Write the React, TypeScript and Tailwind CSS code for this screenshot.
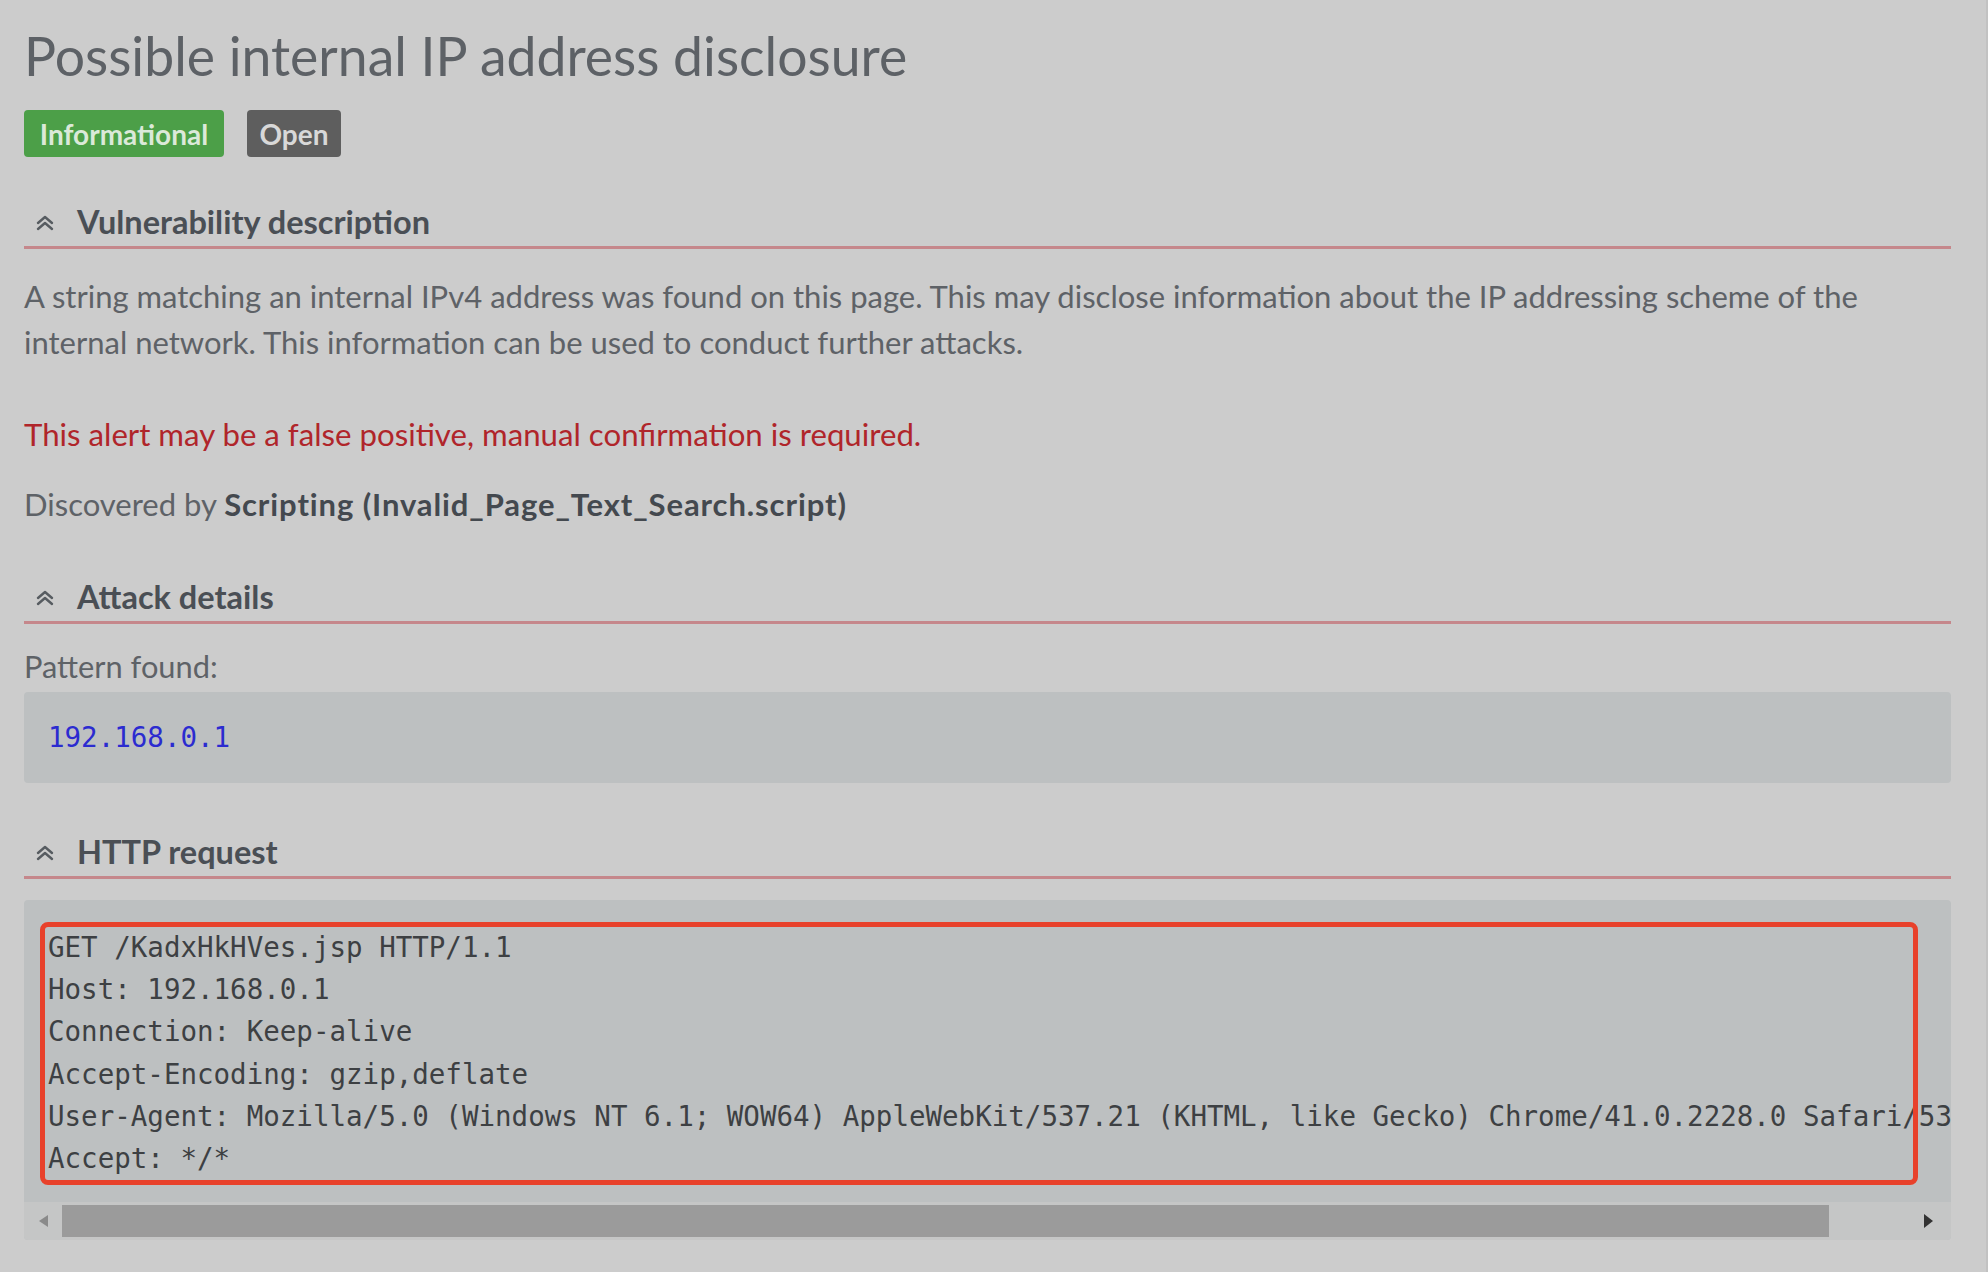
import type { FC, ReactNode } from "react";

const sans = "font-['Lato','Noto_Sans',sans-serif]";
const mono = "font-['DejaVu_Sans_Mono','Liberation_Mono',monospace]";

// double chevron shown before every section title
const Collapse: FC = () => (
	<svg
		viewBox="0 0 20 18"
		className="ml-[11px] h-[18px] w-[20px] text-[#575c61]"
		fill="none"
		stroke="currentColor"
		strokeWidth={2.4}
		strokeLinecap="round"
		strokeLinejoin="round"
	>
		<path d="M3 9 L10 3 L17 9" />
		<path d="M3 15 L10 9 L17 15" />
	</svg>
);

const SectionHeader: FC<{ title: string; className?: string }> = ({ title, className }) => (
	<div
		className={`flex h-[50px] items-center border-b-[3px] border-[#c5878b] ${className ?? ""}`}
	>
		<Collapse />
		<span className="ml-[22px] text-[32.5px] font-bold text-[#4a4f55]">{title}</span>
	</div>
);

const requestLines = [
	"GET /KadxHkHVes.jsp HTTP/1.1",
	"Host: 192.168.0.1",
	"Connection: Keep-alive",
	"Accept-Encoding: gzip,deflate",
	"User-Agent: Mozilla/5.0 (Windows NT 6.1; WOW64) AppleWebKit/537.21 (KHTML, like Gecko) Chrome/41.0.2228.0 Safari/537.21",
	"Accept: */*",
];

const Badge: FC<{ children: ReactNode; className: string }> = ({ children, className }) => (
	<span
		className={`flex h-[47px] items-center justify-center rounded-[4px] text-[28px] font-bold ${className}`}
	>
		{children}
	</span>
);

export default function App() {
	return (
		<div
			className={`min-h-screen w-[1988px] border-r-2 border-[#c2c2c2] bg-[#cccccc] pb-[32px] pl-[24px] pr-[35px] pt-[27px] ${sans}`}
		>
			<h1 className="text-[53.5px] leading-[56px] font-normal text-[#5d6166]">
				Possible internal IP address disclosure
			</h1>

			<div className="mt-[27px] flex gap-[23px]">
				<Badge className="w-[200px] bg-[#4c9f48] text-[#dbe9d9]">Informational</Badge>
				<Badge className="w-[94px] bg-[#5e5e5e] text-[#d8d8d8]">Open</Badge>
			</div>

			<SectionHeader title="Vulnerability description" className="mt-[42px]" />

			<p className="mt-[24px] whitespace-nowrap text-[31px] leading-[46px] text-[#5e6267]">
				A string matching an internal IPv4 address was found on this page. This may disclose
				information about the IP addressing scheme of the
				<br />
				internal network. This information can be used to conduct further attacks.
			</p>

			<p className="mt-[46px] text-[31.2px] leading-[46px] text-[#b0252a]">
				This alert may be a false positive, manual confirmation is required.
			</p>

			<p className="mt-[24px] text-[31px] leading-[46px] text-[#5e6267]">
				Discovered by{" "}
				<span className="font-bold tracking-[0.9px] text-[#44494f]">
					Scripting (Invalid_Page_Text_Search.script)
				</span>
			</p>

			<SectionHeader title="Attack details" className="mt-[47px]" />

			<p className="mt-[20px] text-[30.8px] leading-[46px] text-[#5e6267]">Pattern found:</p>

			<div className="mt-[2px] flex h-[91px] items-center rounded-[4px] bg-[#bdc0c1] px-[24px]">
				<span className={`text-[27.5px] text-[#2b2bd0] ${mono}`}>192.168.0.1</span>
			</div>

			<SectionHeader title="HTTP request" className="mt-[46px]" />

			<div className="mt-[21px] overflow-hidden rounded-[4px] bg-[#bdc0c1]">
				<div className="relative h-[302px] overflow-hidden">
					<pre
						className={`whitespace-pre pl-[24px] pt-[26px] text-[27.5px] leading-[42.2px] text-[#3d4043] ${mono}`}
					>
						{requestLines.join("\n")}
					</pre>
					{/* highlight box drawn over the request */}
					<div className="absolute left-[16px] top-[22px] h-[263px] w-[1878px] rounded-[8px] border-[5px] border-[#e8412b]" />
				</div>
				<div className="flex h-[38px] items-stretch bg-[#c5c6c6]">
					<div className="flex w-[38px] items-center justify-center">
						<span className="h-0 w-0 border-y-[6px] border-r-[9px] border-y-transparent border-r-[#8a8a8a]" />
					</div>
					<div className="my-[3px] w-[1767px] bg-[#9b9b9b]" />
					<div className="flex flex-1 items-center justify-end pr-[18px]">
						<span className="h-0 w-0 border-y-[7px] border-l-[9px] border-y-transparent border-l-[#333333]" />
					</div>
				</div>
			</div>
		</div>
	);
}
